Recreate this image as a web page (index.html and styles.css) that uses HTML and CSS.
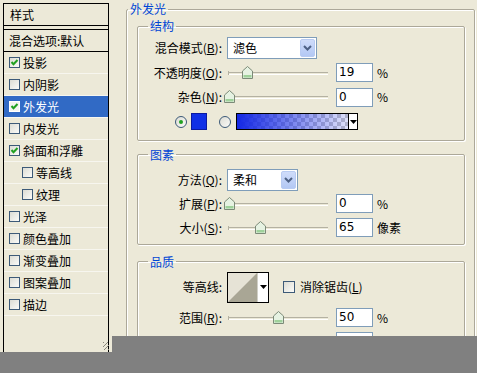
FILE: index.html
```html
<!DOCTYPE html>
<html lang="zh-CN">
<head>
    <meta charset="UTF-8">
    <title>图层样式 - 外发光</title>
    <link rel="stylesheet" href="styles.css">
</head>
<body>
    <div class="window">
        <div class="styles-panel">
            <div class="panel-head">样式</div>
            <div class="panel-blend">混合选项:默认</div>
            <ul class="effect-list">
                <li class="effect-item"><span class="check"><svg width="9" height="9" viewBox="0 0 9 9"><path d="M1.5 4 L3.5 6.2 L7.5 2" fill="none" stroke="#21a121" stroke-width="2"/></svg></span>投影</li>
                <li class="effect-item"><span class="check"></span>内阴影</li>
                <li class="effect-item selected"><span class="check"><svg width="9" height="9" viewBox="0 0 9 9"><path d="M1.5 4 L3.5 6.2 L7.5 2" fill="none" stroke="#21a121" stroke-width="2"/></svg></span>外发光</li>
                <li class="effect-item"><span class="check"></span>内发光</li>
                <li class="effect-item"><span class="check"><svg width="9" height="9" viewBox="0 0 9 9"><path d="M1.5 4 L3.5 6.2 L7.5 2" fill="none" stroke="#21a121" stroke-width="2"/></svg></span>斜面和浮雕</li>
                <li class="effect-item sub"><span class="check"></span>等高线</li>
                <li class="effect-item sub"><span class="check"></span>纹理</li>
                <li class="effect-item"><span class="check"></span>光泽</li>
                <li class="effect-item"><span class="check"></span>颜色叠加</li>
                <li class="effect-item"><span class="check"></span>渐变叠加</li>
                <li class="effect-item"><span class="check"></span>图案叠加</li>
                <li class="effect-item"><span class="check"></span>描边</li>
            </ul>
        </div>

        <fieldset class="group outer">
            <legend>外发光</legend>

            <fieldset class="group structure">
                <legend>结构</legend>
                <div class="form-row">
                    <label>混合模式(<u>B</u>):</label>
                    <div class="control">
                        <div class="combo wide"><span class="combo-text">滤色</span><span class="combo-btn"><svg width="9" height="6" viewBox="0 0 9 6"><path d="M1 1 L4.5 4.5 L8 1" fill="none" stroke="#4d6185" stroke-width="2"/></svg></span></div>
                    </div>
                </div>
                <div class="form-row">
                    <label>不透明度(<u>O</u>):</label>
                    <div class="control">
                        <div class="slider"><span class="thumb" style="left: 19%"><svg width="11" height="13" viewBox="0 0 11 13"><path d="M0.5 5 L5.5 0.5 L10.5 5 L10.5 12.5 L0.5 12.5 Z" fill="#e6f2e2" stroke="#7c8a78"/><path d="M1.5 9 H9.5 V11.5 H1.5 Z" fill="#9ed19a"/></svg></span></div>
                        <div class="field">19</div><span class="unit">%</span>
                    </div>
                </div>
                <div class="form-row">
                    <label>杂色(<u>N</u>):</label>
                    <div class="control">
                        <div class="slider"><span class="thumb" style="left: 1%"><svg width="11" height="13" viewBox="0 0 11 13"><path d="M0.5 5 L5.5 0.5 L10.5 5 L10.5 12.5 L0.5 12.5 Z" fill="#e6f2e2" stroke="#7c8a78"/><path d="M1.5 9 H9.5 V11.5 H1.5 Z" fill="#9ed19a"/></svg></span></div>
                        <div class="field">0</div><span class="unit">%</span>
                    </div>
                </div>
                <div class="color-row">
                    <span class="radio on"></span>
                    <span class="swatch"></span>
                    <span class="radio"></span>
                    <span class="gradient"></span>
                    <span class="gradient-btn"><svg width="7" height="4" viewBox="0 0 7 4"><path d="M0 0 H7 L3.5 4 Z" fill="#000"/></svg></span>
                </div>
            </fieldset>

            <fieldset class="group elements">
                <legend>图素</legend>
                <div class="form-row">
                    <label>方法(<u>Q</u>):</label>
                    <div class="control">
                        <div class="combo narrow"><span class="combo-text">柔和</span><span class="combo-btn"><svg width="9" height="6" viewBox="0 0 9 6"><path d="M1 1 L4.5 4.5 L8 1" fill="none" stroke="#4d6185" stroke-width="2"/></svg></span></div>
                    </div>
                </div>
                <div class="form-row">
                    <label>扩展(<u>P</u>):</label>
                    <div class="control">
                        <div class="slider"><span class="thumb" style="left: 1%"><svg width="11" height="13" viewBox="0 0 11 13"><path d="M0.5 5 L5.5 0.5 L10.5 5 L10.5 12.5 L0.5 12.5 Z" fill="#e6f2e2" stroke="#7c8a78"/><path d="M1.5 9 H9.5 V11.5 H1.5 Z" fill="#9ed19a"/></svg></span></div>
                        <div class="field">0</div><span class="unit">%</span>
                    </div>
                </div>
                <div class="form-row">
                    <label>大小(<u>S</u>):</label>
                    <div class="control">
                        <div class="slider"><span class="thumb" style="left: 32%"><svg width="11" height="13" viewBox="0 0 11 13"><path d="M0.5 5 L5.5 0.5 L10.5 5 L10.5 12.5 L0.5 12.5 Z" fill="#e6f2e2" stroke="#7c8a78"/><path d="M1.5 9 H9.5 V11.5 H1.5 Z" fill="#9ed19a"/></svg></span></div>
                        <div class="field">65</div><span class="unit">像素</span>
                    </div>
                </div>
            </fieldset>

            <fieldset class="group quality">
                <legend>品质</legend>
                <div class="form-row contour-row">
                    <label>等高线:</label>
                    <div class="control">
                        <div class="contour">
                            <svg class="contour-curve" width="29" height="29" viewBox="0 0 29 29"><rect width="29" height="29" fill="#e6e3d6"/><path d="M0 29 L29 0 L29 29 Z" fill="#a9a695"/></svg>
                            <span class="contour-btn"><svg width="7" height="4" viewBox="0 0 7 4"><path d="M0 0 H7 L3.5 4 Z" fill="#000"/></svg></span>
                        </div>
                        <span class="check box-only"></span>
                        <span class="check-label">消除锯齿(<u>L</u>)</span>
                    </div>
                </div>
                <div class="form-row">
                    <label>范围(<u>R</u>):</label>
                    <div class="control">
                        <div class="slider"><span class="thumb" style="left: 50%"><svg width="11" height="13" viewBox="0 0 11 13"><path d="M0.5 5 L5.5 0.5 L10.5 5 L10.5 12.5 L0.5 12.5 Z" fill="#e6f2e2" stroke="#7c8a78"/><path d="M1.5 9 H9.5 V11.5 H1.5 Z" fill="#9ed19a"/></svg></span></div>
                        <div class="field">50</div><span class="unit">%</span>
                    </div>
                </div>
                <div class="form-row">
                    <label>抖动(<u>J</u>):</label>
                    <div class="control">
                        <div class="slider"></div>
                        <div class="field">0</div><span class="unit">%</span>
                    </div>
                </div>
            </fieldset>
        </fieldset>
    </div>

    <div class="grip"></div>
    <div class="cover cover-right"></div>
    <div class="cover cover-bottom"></div>
</body>
</html>
```

FILE: styles.css
```css
body {
    font-family: "Noto Sans CJK SC", "DejaVu Sans", sans-serif;
    font-size: 12px;
    line-height: 14px;
    color: #000;
    margin: 0;
    padding: 0;
    background-color: #ece9d8;
    width: 477px;
    height: 373px;
    overflow: hidden;
    position: relative;
}

u {
    text-decoration: underline;
}

.window {
    display: flex;
    align-items: flex-start;
    height: 373px;
    overflow: hidden;
}

/* left list of styles */

.styles-panel {
    margin: 3px 0 0 3px;
    width: 106px;
    height: 370px;
    box-sizing: border-box;
    border-left: 1px solid #000;
    border-right: 1px solid #000;
}

.panel-head {
    height: 21px;
    line-height: 21px;
    padding-left: 6px;
    border-top: 1px solid #000;
    border-bottom: 1px solid #000;
}

.panel-blend {
    margin-top: 3px;
    height: 21px;
    line-height: 21px;
    padding-left: 5px;
    border-top: 1px solid #000;
    border-bottom: 1px solid #000;
}

.effect-list {
    list-style: none;
    margin: 0;
    padding: 0;
}

.effect-item {
    display: flex;
    align-items: center;
    height: 21px;
    padding-left: 5px;
    border-bottom: 1px solid #f7f6ef;
}

.effect-item.sub {
    padding-left: 18px;
}

.effect-item.selected {
    background-color: #316ac5;
    color: #fff;
}

.check {
    display: inline-flex;
    align-items: center;
    justify-content: center;
    width: 11px;
    height: 11px;
    box-sizing: border-box;
    border: 1px solid #3d5a78;
    background: linear-gradient(135deg, #dcdcd4, #fbfbf8);
    margin-right: 3px;
    flex-shrink: 0;
}

.effect-item.selected .check {
    border-color: #fff;
    background: #f4f4f0;
}

/* right side group boxes */

.group {
    border: 1px solid #aca899;
    box-shadow: inset 1px 1px 0 #fff, 1px 1px 0 #fff;
    border-radius: 2px;
    margin: 0;
    padding: 0;
    min-width: 0;
}

.group legend {
    color: #0046d5;
    line-height: 14px;
    padding: 0 2px;
    margin-left: 10px;
}

.outer {
    margin: 2px 0 0 17px;
    width: 349px;
    height: 371px;
    box-sizing: border-box;
    padding: 0 9px 0 0;
}

.outer > legend {
    margin-left: 1px;
}

.outer > .group {
    margin-left: 10px;
}

.structure {
    margin-top: 3px;
    padding: 4px 0 7px;
}

.elements {
    margin-top: 7px;
    padding: 7px 0 5px;
}

.quality {
    margin-top: 10px;
    padding: 3px 0 5px;
}

.form-row {
    display: grid;
    grid-template-columns: 84px auto;
    column-gap: 5px;
    align-items: center;
    height: 22px;
}

.structure .form-row {
    margin-bottom: 2.5px;
}

.elements .form-row + .form-row {
    margin-top: 2px;
}

.quality .contour-row {
    height: 30px;
    margin-bottom: 5px;
}

.quality .form-row + .form-row + .form-row {
    margin-top: 2px;
}

.form-row label {
    text-align: right;
    white-space: nowrap;
}

.control {
    display: flex;
    align-items: center;
}

/* combo boxes */

.combo {
    display: flex;
    align-items: center;
    justify-content: space-between;
    height: 22px;
    box-sizing: border-box;
    border: 1px solid #7f9db9;
    background-color: #fff;
}

.combo.wide {
    width: 90px;
}

.combo.narrow {
    width: 71px;
}

.combo-text {
    padding-left: 5px;
}

.combo-btn {
    display: flex;
    align-items: center;
    justify-content: center;
    width: 15px;
    height: 18px;
    margin-right: 1px;
    border-radius: 2px;
    background: linear-gradient(#cfdcfa, #b3c8f4);
    border: 1px solid #b8cbf2;
    box-sizing: border-box;
}

/* sliders and number fields */

.slider {
    position: relative;
    width: 100px;
    height: 22px;
    margin-left: 1px;
}

.slider::before {
    content: "";
    position: absolute;
    left: 0;
    right: 0;
    top: 10px;
    height: 1px;
    border-top: 1px solid #b4b1a2;
    border-bottom: 1px solid #fff;
}

.slider::after {
    content: "";
    position: absolute;
    left: 0;
    top: 9px;
    width: 1px;
    height: 4px;
    background-color: #b4b1a2;
}

.thumb {
    position: absolute;
    top: 4px;
    width: 11px;
    height: 13px;
    transform: translateX(-5px);
    z-index: 1;
}

.thumb svg {
    display: block;
}

.field {
    width: 37px;
    height: 19px;
    box-sizing: border-box;
    margin-left: 8px;
    border: 1px solid #7f9db9;
    background-color: #fff;
    font-family: "DejaVu Sans", sans-serif;
    font-size: 12px;
    line-height: 17px;
    padding-left: 2px;
}

.unit {
    margin-left: 4px;
}

/* colour choice */

.color-row {
    display: flex;
    align-items: center;
    height: 22px;
    padding-left: 37px;
}

.radio {
    width: 12px;
    height: 12px;
    box-sizing: border-box;
    border: 1px solid #3d5a78;
    border-radius: 50%;
    background: linear-gradient(135deg, #dcdcd4, #fbfbf8);
    display: flex;
    align-items: center;
    justify-content: center;
}

.radio.on::after {
    content: "";
    width: 4px;
    height: 4px;
    border-radius: 50%;
    background-color: #21a121;
}

.swatch {
    width: 16px;
    height: 17px;
    margin-left: 4px;
    box-sizing: border-box;
    border: 1px solid #0a1aa0;
    background-color: #1030e6;
}

.swatch + .radio {
    margin-left: 12px;
}

.radio + .gradient {
    margin-left: 5px;
}

.gradient {
    width: 112px;
    height: 17px;
    box-sizing: border-box;
    border: 1px solid #000;
    border-right: none;
    background:
        linear-gradient(to right, #1428e4, rgba(40, 60, 230, 0.15)),
        repeating-conic-gradient(#c8c8c8 0 25%, #fff 0 50%) 0 0 / 8px 8px;
}

.gradient-btn {
    display: flex;
    align-items: center;
    justify-content: center;
    width: 10px;
    height: 17px;
    box-sizing: border-box;
    border: 1px solid #000;
    background-color: #fff;
}

/* contour picker */

.contour {
    display: flex;
    height: 31px;
    box-sizing: border-box;
    border: 1px solid #000;
    background-color: #fff;
}

.contour-curve {
    display: block;
}

.contour-btn {
    display: flex;
    align-items: center;
    justify-content: center;
    width: 10px;
    border-left: 1px solid #d0cfc6;
}

.check.box-only {
    margin-left: 14px;
    width: 12px;
    height: 12px;
}

.check-label {
    margin-left: 2px;
}

/* screenshot edge */

.grip {
    position: absolute;
    left: 103px;
    top: 342px;
    width: 6px;
    height: 8px;
    background: repeating-linear-gradient(135deg, #8a887c 0 1px, transparent 1px 3px);
}

.cover {
    position: absolute;
    background-color: #808080;
}

.cover-right {
    left: 112px;
    top: 336px;
    right: 0;
    bottom: 0;
}

.cover-bottom {
    left: 0;
    top: 352px;
    right: 0;
    bottom: 0;
}
```
